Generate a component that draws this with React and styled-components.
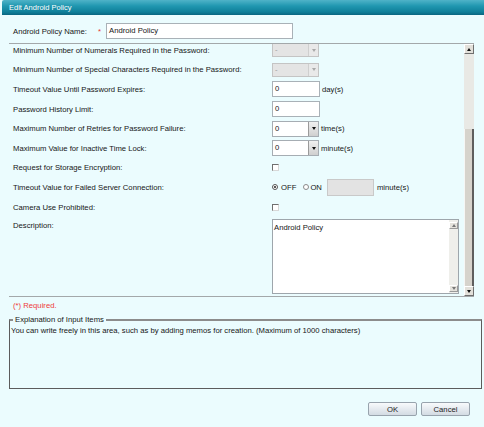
import React from 'react';
import styled, { createGlobalStyle } from 'styled-components';

const GlobalStyle = createGlobalStyle`
  html, body {
    margin: 0;
    padding: 0;
    background: #ebfcfe;
  }
  body {
    font-family: "Liberation Sans", Arial, sans-serif;
    font-size: 7.7px;
    color: #161616;
  }
  * {
    box-sizing: border-box;
  }
`;

const Dialog = styled.div`
  width: 484px;
  height: 427px;
  display: flex;
  flex-direction: column;
  background: #ebfcfe;
  overflow: hidden;
`;

const TitleBar = styled.div`
  height: 15px;
  margin-left: 2px;
  padding-left: 7px;
  line-height: 15px;
  font-size: 7.5px;
  color: #ffffff;
  border-top-left-radius: 2px;
  background: linear-gradient(to bottom, #4fb3c8 0%, #2097b0 40%, #0f7f99 80%, #0a6580 100%);
`;

const NameRow = styled.div`
  display: flex;
  align-items: center;
  height: 16px;
  margin-top: 8px;
  padding-left: 13px;
`;

const NameLabel = styled.span`
  width: 85px;
`;

const Mark = styled.span`
  width: 8px;
  color: #e8322f;
`;

const TextBox = styled.div`
  width: ${p => p.$w}px;
  height: ${p => p.$h || 16}px;
  margin-right: ${p => p.$space || 0}px;
  padding-left: 2px;
  line-height: ${p => (p.$h || 16) - 2}px;
  border: 1px solid ${p => (p.$disabled ? '#c9c9c9' : '#a9b1b7')};
  background: ${p => (p.$disabled ? '#e3e3e3' : '#ffffff')};
`;

const Panel = styled.div`
  display: flex;
  height: 254px;
  margin: 4px 10px 0 9px;
  border-top: 1px solid #a3a8aa;
  border-bottom: 1px solid #a3a8aa;
`;

const Rows = styled.div`
  flex: 1;
  overflow: hidden;
  padding-left: 4px;
`;

const RowList = styled.div`
  margin-top: -3.5px;
`;

const Row = styled.div`
  display: grid;
  grid-template-columns: 259px 1fr;
  align-items: ${p => (p.$tall ? 'start' : 'center')};
  height: ${p => (p.$tall ? 'auto' : '19.6px')};
`;

const Label = styled.span`
  line-height: 9px;
  padding-top: ${p => (p.$tall ? '4.6px' : '0')};
`;

const Controls = styled.div`
  display: flex;
  align-items: center;
  gap: ${p => p.$gap ?? 2}px;
`;

const Select = styled.div`
  display: flex;
  width: 47px;
  height: ${p => (p.$disabled ? 14 : 16)}px;
  border: 1px solid ${p => (p.$disabled ? '#c4c4c4' : '#a6adb3')};
  background: ${p => (p.$disabled ? '#e4e4e4' : '#ffffff')};
`;

const SelectValue = styled.span`
  flex: 1;
  padding-left: 2px;
  line-height: ${p => (p.$disabled ? 12 : 14)}px;
  color: ${p => (p.$disabled ? '#9a9a9a' : '#161616')};
`;

const SelectButton = styled.span`
  width: 10px;
  display: flex;
  align-items: center;
  justify-content: center;
  border-left: 1px solid ${p => (p.$disabled ? '#cfcfcf' : '#9a9a9a')};
  background: ${p => (p.$disabled ? '#e9e9e9' : 'linear-gradient(to bottom, #f0f0f0, #cfcfcf)')};
`;

const Arrow = styled.span`
  width: 0;
  height: 0;
  border-left: 2.5px solid transparent;
  border-right: 2.5px solid transparent;
  ${p => (p.$dir === 'up' ? 'border-bottom' : 'border-top')}: 3px solid ${p => p.$color || '#111'};
`;

const Unit = styled.span`
  line-height: 9px;
`;

const CheckBox = styled.span`
  display: block;
  width: 7px;
  height: 7px;
  background: #ffffff;
  border: 1px solid;
  border-color: #6f6f6f #d8d8d8 #d8d8d8 #6f6f6f;
`;

const Radio = styled.span`
  position: relative;
  display: block;
  width: 6px;
  height: 6px;
  border-radius: 50%;
  border: 1px solid ${p => (p.$checked ? '#555' : '#8a8a8a')};
  background: #ffffff;

  &::after {
    content: '';
    display: ${p => (p.$checked ? 'block' : 'none')};
    position: absolute;
    left: 1px;
    top: 1px;
    width: 2px;
    height: 2px;
    border-radius: 50%;
    background: #222;
  }
`;

const Choice = styled.span`
  display: flex;
  align-items: center;
  gap: ${p => p.$gap || 1}px;
  margin-right: ${p => p.$space || 0}px;
`;

const MemoBox = styled.div`
  display: flex;
  width: 187px;
  height: 75px;
  margin-top: 2px;
  border: 1px solid #9ea6ac;
  background: #ffffff;
`;

const MemoText = styled.div`
  flex: 1;
  padding: 3px 1px;
  line-height: 9px;
`;

const MiniBar = styled.div`
  width: 9px;
  display: flex;
  flex-direction: column;
  justify-content: space-between;
  padding: 2px 0 1px;
  background: #efefeb;
`;

const MiniArrow = styled.div`
  height: 7px;
  display: flex;
  align-items: center;
  justify-content: center;
  background: #e4e2dc;
  border: 1px solid;
  border-color: #ffffff #9a9a9a #9a9a9a #ffffff;
`;

const ScrollBar = styled.div`
  width: 10px;
  display: flex;
  flex-direction: column;
  background: #e9e9e5;
`;

const ScrollArrow = styled.div`
  height: 10px;
  display: flex;
  align-items: center;
  justify-content: center;
  background: #e2e0da;
  border: 1px solid;
  border-color: #ffffff #6f6f6f #6f6f6f #ffffff;
`;

const Track = styled.div`
  flex: 1;
  display: flex;
  flex-direction: column;
  justify-content: flex-end;
`;

const Thumb = styled.div`
  height: 157px;
  background: #d6d3cc;
  border-left: 1px solid #f6f6f4;
  border-right: 2px solid #5e5e5e;
`;

const Note = styled.div`
  height: 9px;
  margin: 4px 0 0 13px;
  line-height: 9px;
  color: #ee3b3b;
`;

const Explain = styled.fieldset`
  margin: 5px 2px 0 9px;
  padding: 0 1px;
  min-width: 0;
  border: 1px solid #5c5c5c;
  border-top: 2px solid #8c8c8c;
`;

const Legend = styled.legend`
  margin-left: 2px;
  padding: 0 2px;
  line-height: 9px;
`;

const ExplainText = styled.div`
  height: 64px;
  padding-top: 2px;
  line-height: 9px;
`;

const Footer = styled.div`
  display: flex;
  justify-content: flex-end;
  gap: 4px;
  margin-top: 13px;
  padding-right: 14px;
`;

const Button = styled.button`
  width: 49px;
  height: 14px;
  padding: 0;
  font-family: inherit;
  font-size: 7.7px;
  color: #222;
  border: 1px solid #98a3ad;
  border-radius: 2px;
  background: linear-gradient(to bottom, #f8fafc, #d3dbe3);
`;

const DropDown = ({ value, disabled }) => (
  <Select $disabled={disabled}>
    <SelectValue $disabled={disabled}>{value}</SelectValue>
    <SelectButton $disabled={disabled}>
      <Arrow $color={disabled ? '#a8a8a8' : '#111'} />
    </SelectButton>
  </Select>
);

const App = () => (
  <Dialog>
    <GlobalStyle />
    <TitleBar>Edit Android Policy</TitleBar>

    <NameRow>
      <NameLabel>Android Policy Name:</NameLabel>
      <Mark>*</Mark>
      <TextBox $w={187}>Android Policy</TextBox>
    </NameRow>

    <Panel>
      <Rows>
        <RowList>
          <Row>
            <Label>Minimum Number of Numerals Required in the Password:</Label>
            <Controls><DropDown value="-" disabled /></Controls>
          </Row>
          <Row>
            <Label>Minimum Number of Special Characters Required in the Password:</Label>
            <Controls><DropDown value="-" disabled /></Controls>
          </Row>
          <Row>
            <Label>Timeout Value Until Password Expires:</Label>
            <Controls>
              <TextBox $w={48}>0</TextBox>
              <Unit>day(s)</Unit>
            </Controls>
          </Row>
          <Row>
            <Label>Password History Limit:</Label>
            <Controls><TextBox $w={48}>0</TextBox></Controls>
          </Row>
          <Row>
            <Label>Maximum Number of Retries for Password Failure:</Label>
            <Controls>
              <DropDown value="0" />
              <Unit>time(s)</Unit>
            </Controls>
          </Row>
          <Row>
            <Label>Maximum Value for Inactive Time Lock:</Label>
            <Controls>
              <DropDown value="0" />
              <Unit>minute(s)</Unit>
            </Controls>
          </Row>
          <Row>
            <Label>Request for Storage Encryption:</Label>
            <Controls><CheckBox /></Controls>
          </Row>
          <Row>
            <Label>Timeout Value for Failed Server Connection:</Label>
            <Controls $gap={0}>
              <Choice $gap={3} $space={7}><Radio $checked />OFF</Choice>
              <Choice $gap={1} $space={5}><Radio />ON</Choice>
              <TextBox $w={47} $h={17} $space={3} $disabled />
              <Unit>minute(s)</Unit>
            </Controls>
          </Row>
          <Row>
            <Label>Camera Use Prohibited:</Label>
            <Controls><CheckBox /></Controls>
          </Row>
          <Row $tall>
            <Label $tall>Description:</Label>
            <MemoBox>
              <MemoText>Android Policy</MemoText>
              <MiniBar>
                <MiniArrow><Arrow $dir="up" $color="#777" /></MiniArrow>
                <MiniArrow><Arrow $color="#777" /></MiniArrow>
              </MiniBar>
            </MemoBox>
          </Row>
        </RowList>
      </Rows>
      <ScrollBar>
        <ScrollArrow><Arrow $dir="up" /></ScrollArrow>
        <Track><Thumb /></Track>
        <ScrollArrow><Arrow /></ScrollArrow>
      </ScrollBar>
    </Panel>

    <Note>(*) Required.</Note>

    <Explain>
      <Legend>Explanation of Input Items</Legend>
      <ExplainText>
        You can write freely in this area, such as by adding memos for creation. (Maximum of 1000 characters)
      </ExplainText>
    </Explain>

    <Footer>
      <Button>OK</Button>
      <Button>Cancel</Button>
    </Footer>
  </Dialog>
);

export default App;
